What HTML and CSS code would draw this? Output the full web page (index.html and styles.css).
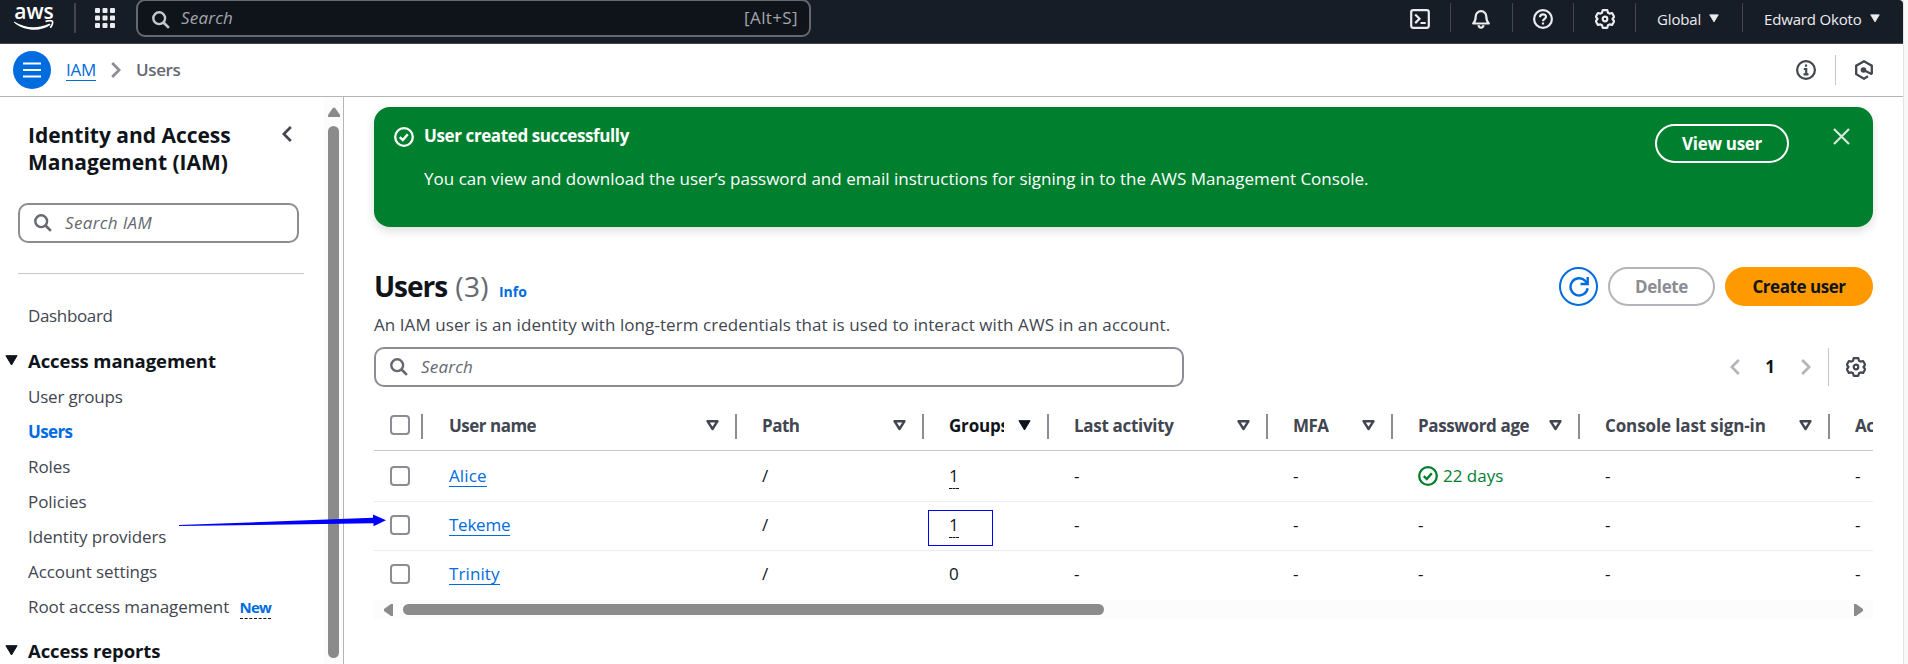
FILE: index.html
```html
<!DOCTYPE html>
<html lang="en">
<head>
<meta charset="utf-8">
<title>Users | IAM</title>
<link rel="stylesheet" href="styles.css">
</head>
<body>
<svg class="defs" aria-hidden="true">
  <symbol id="i-search" viewBox="0 0 18 18"><circle cx="7.2" cy="7.2" r="5.9" fill="none" stroke="currentColor" stroke-width="2.4"/><path d="M11.5 11.5l5.4 5.4" fill="none" stroke="currentColor" stroke-width="2.6"/></symbol>
  <symbol id="i-check" viewBox="0 0 20 20"><circle cx="10" cy="10" r="8.8" fill="none" stroke="currentColor" stroke-width="2.3"/><path d="M5.8 10.2l3 2.9 5-5.8" fill="none" stroke="currentColor" stroke-width="2.4"/></symbol>
  <symbol id="i-gear" viewBox="0 0 20 20"><path d="M7.7 1.2h4.6l.7 2.5 1.6.9 2.5-.6 2.1 3.7-1.7 2.3 1.7 2.3-2.1 3.7-2.5-.6-1.6.9-.7 2.5H7.7L7 16.300l-1.600-.9-2.500.6L.8 12.300 2.500 10 .8 7.700 2.900 4l2.500.6L7 3.700z" fill="none" stroke="currentColor" stroke-width="2.2" stroke-linejoin="round"/><circle cx="10" cy="10" r="2.300" fill="none" stroke="currentColor" stroke-width="2.200"/></symbol>
  <symbol id="i-sort" viewBox="0 0 13 11"><path d="M1.500 1.200h10L6.500 9z" fill="none" stroke="currentColor" stroke-width="2.400" stroke-linejoin="round"/></symbol>
  <symbol id="i-caret" viewBox="0 0 13 11"><path d="M.9.700h11.200L6.500 10z" fill="currentColor" stroke="currentColor" stroke-linejoin="round"/></symbol>
  <symbol id="i-left" viewBox="0 0 10 16"><path d="M8.800 1L1.800 8l7 7" fill="none" stroke="currentColor" stroke-width="2.700"/></symbol>
  <symbol id="i-right" viewBox="0 0 10 16"><path d="M1.200 1l7 7-7 7" fill="none" stroke="currentColor" stroke-width="2.700"/></symbol>
</svg>
<div class="page">
  <header class="topbar">
    <div class="logo"><span class="logo-text">aws</span>
      <svg class="swoosh" width="40" height="11" viewBox="0 0 40 11"><path d="M0 1.500c11 7 24 7.500 35 2.300 1.200-.5 2 .7.900 1.500C26 12.200 10 11 0 2.500z" fill="currentColor"/><path d="M31.500 1.600c3.500-1.300 6.500-1 7 0 .5 1.400-.7 4.600-2.300 6.100" fill="none" stroke="currentColor" stroke-width="1.600"/></svg>
    </div>
    <span class="bar bar-logo"></span>
    <svg class="apps" width="20" height="20" viewBox="0 0 20 20" fill="currentColor"><rect width="5" height="5" rx="1"/><rect x="7.500" width="5" height="5" rx="1"/><rect x="15" width="5" height="5" rx="1"/><rect y="7.500" width="5" height="5" rx="1"/><rect x="7.500" y="7.500" width="5" height="5" rx="1"/><rect x="15" y="7.500" width="5" height="5" rx="1"/><rect y="15" width="5" height="5" rx="1"/><rect x="7.500" y="15" width="5" height="5" rx="1"/><rect x="15" y="15" width="5" height="5" rx="1"/></svg>
    <div class="topsearch"><svg width="18" height="18"><use href="#i-search"/></svg><span class="placeholder">Search</span><span class="shortcut">[Alt+S]</span></div>
    <nav class="tools">
      <div class="tool w-shell"><svg width="20" height="20" viewBox="0 0 20 20" fill="none" stroke="currentColor" stroke-width="2.200"><rect x="1.200" y="1.200" width="17.600" height="17.600" rx="2"/><path d="M5.200 5.500L9.500 9.800l-4.300 4.300M10.500 14h5.200"/></svg></div>
      <div class="tool w-bell"><svg width="20" height="20" viewBox="0 0 20 20" fill="none" stroke="currentColor" stroke-width="2.200" stroke-linejoin="round"><path d="M2.200 14.500c2-2 2.500-3.500 2.500-7a5.300 5.300 0 0 1 10.600 0c0 3.500.5 5 2.500 7z"/><path d="M7.500 16.200c.4 3.300 4.600 3.300 5 0" /></svg></div>
      <div class="tool w-help"><svg width="20" height="20" viewBox="0 0 20 20" fill="none" stroke="currentColor" stroke-width="2.200"><circle cx="10" cy="10" r="8.900"/><path d="M7 8.300c0-4 6-3.700 6-.5 0 2-3 2-3 4.400M10 13.400v2.200"/></svg></div>
      <div class="tool w-gear"><svg width="20" height="20"><use href="#i-gear"/></svg></div>
      <div class="tool w-global">Global<svg width="10" height="9"><use href="#i-caret"/></svg></div>
      <div class="tool w-user">Edward Okoto<svg width="10" height="9"><use href="#i-caret"/></svg></div>
    </nav>
  </header>

  <div class="crumbs">
    <span class="menu"><svg width="18" height="16" viewBox="0 0 18 16" stroke="#fff" stroke-width="2.200"><path d="M0 1.500h18M0 8h18M0 14.500h18"/></svg></span>
    <a class="link crumb-link">IAM</a>
    <svg class="crumb-sep" width="10" height="16"><use href="#i-right"/></svg>
    <span class="crumb-here">Users</span>
    <div class="crumb-tools">
      <svg width="20" height="20" viewBox="0 0 20 20" fill="none" stroke="currentColor" stroke-width="2.200"><circle cx="10" cy="10" r="8.900"/><path d="M10 4.500v2.300M7.800 9h2.400v5M7.500 14.300h5"/></svg>
      <span class="crumb-bar"></span>
      <svg width="20" height="20" viewBox="0 0 20 20" fill="none" stroke="currentColor" stroke-width="2.300"><path d="M14 16.300l-4 2.400-7.800-4.500V5.700L10 1.300l7.800 4.400v8.500"/><circle cx="9.500" cy="10" r="2.800" fill="currentColor" stroke="none"/><path d="M10 10.300l8 3.900"/></svg>
    </div>
  </div>

  <div class="body">
    <aside class="side">
      <div class="side-inner">
        <div class="side-head"><h2>Identity and Access<br>Management (IAM)</h2><svg width="10" height="16"><use href="#i-left"/></svg></div>
        <div class="field side-search"><svg width="18" height="18"><use href="#i-search"/></svg><span class="placeholder">Search IAM</span></div>
        <hr>
        <div class="item t-dash">Dashboard</div>
        <div class="group g-mgmt"><svg width="13" height="11"><use href="#i-caret"/></svg>Access management</div>
        <div class="item t-groups">User groups</div>
        <div class="item current">Users</div>
        <div class="item">Roles</div>
        <div class="item">Policies</div>
        <div class="item">Identity providers</div>
        <div class="item">Account settings</div>
        <div class="item">Root access management <span class="new">New</span></div>
        <div class="group g-rep"><svg width="13" height="11"><use href="#i-caret"/></svg>Access reports</div>
      </div>
      <div class="vscroll"><svg width="12" height="10" viewBox="0 0 12 10"><path d="M5 .8h2L12 8v2H0V8z" fill="#8b8b8b"/></svg><div class="vthumb"></div></div>
    </aside>

    <main class="main">
      <section class="banner">
        <svg class="banner-icon" width="20" height="20"><use href="#i-check"/></svg>
        <div class="banner-text"><strong>User created successfully</strong><p>You can view and download the user’s password and email instructions for signing in to the AWS Management Console.</p></div>
        <span class="btn btn-view">View user</span>
        <svg class="close" width="17" height="17" viewBox="0 0 17 17" stroke="#d9e6dc" stroke-width="2.200"><path d="M1 1l15 15M16 1L1 16"/></svg>
      </section>

      <div class="head">
        <div class="head-text">
          <h1>Users <span class="count">(3)</span><span class="info">Info</span></h1>
          <p class="desc">An IAM user is an identity with long-term credentials that is used to interact with AWS in an account.</p>
        </div>
        <div class="actions">
          <span class="btn btn-refresh"><svg width="20" height="20" viewBox="0 0 20 20" fill="none" stroke="currentColor" stroke-width="2.400"><path d="M18.600 11.200a8.600 8.600 0 1 1-2.300-7.300l1.800 2.600"/><path d="M18.700 0v7h-7.200"/></svg></span>
          <span class="btn btn-delete">Delete</span>
          <span class="btn btn-create">Create user</span>
        </div>
      </div>

      <div class="filter">
        <div class="field main-search"><svg width="18" height="18"><use href="#i-search"/></svg><span class="placeholder">Search</span></div>
        <div class="pager"><svg width="10" height="16"><use href="#i-left"/></svg><b>1</b><svg width="10" height="16"><use href="#i-right"/></svg><span class="pager-bar"></span><svg class="pager-gear" width="20" height="20"><use href="#i-gear"/></svg></div>
      </div>

      <div class="table">
        <div class="row thead">
          <div class="cell sel"><span class="box"></span></div>
          <div class="cell"><span class="th">User name</span><svg width="13" height="11"><use href="#i-sort"/></svg></div>
          <div class="cell"><span class="th">Path</span><svg width="13" height="11"><use href="#i-sort"/></svg></div>
          <div class="cell sorted"><span class="th">Groups</span><svg width="13" height="11"><use href="#i-caret"/></svg></div>
          <div class="cell"><span class="th ls-a">Last activity</span><svg width="13" height="11"><use href="#i-sort"/></svg></div>
          <div class="cell"><span class="th">MFA</span><svg width="13" height="11"><use href="#i-sort"/></svg></div>
          <div class="cell"><span class="th ls-p">Password age</span><svg width="13" height="11"><use href="#i-sort"/></svg></div>
          <div class="cell"><span class="th ls-c">Console last sign-in</span><svg width="13" height="11"><use href="#i-sort"/></svg></div>
          <div class="cell last"><span class="th">Access key ID</span></div>
        </div>
        <div class="row">
          <div class="cell sel"><span class="box"></span></div>
          <div class="cell"><a class="link link-wide">Alice</a></div><div class="cell">/</div>
          <div class="cell"><span class="dashed">1</span></div><div class="cell">-</div><div class="cell">-</div>
          <div class="cell ok"><svg width="20" height="20"><use href="#i-check"/></svg>22 days</div><div class="cell">-</div><div class="cell">-</div>
        </div>
        <div class="row">
          <div class="cell sel"><span class="box"></span></div>
          <div class="cell"><a class="link">Tekeme</a></div><div class="cell">/</div>
          <div class="cell"><span class="dashed">1</span></div><div class="cell">-</div><div class="cell">-</div>
          <div class="cell">-</div><div class="cell">-</div><div class="cell">-</div>
        </div>
        <div class="row">
          <div class="cell sel"><span class="box"></span></div>
          <div class="cell"><a class="link link-wide">Trinity</a></div><div class="cell">/</div>
          <div class="cell">0</div><div class="cell">-</div><div class="cell">-</div>
          <div class="cell">-</div><div class="cell">-</div><div class="cell">-</div>
        </div>
      </div>
      <div class="hscroll"><svg width="9" height="12" viewBox="0 0 9 12"><path d="M9 0v12H7L0 7V5L7 0z" fill="#8b8b8b"/></svg><div class="hthumb"></div><svg class="hr-arrow" width="9" height="12" viewBox="0 0 9 12"><path d="M0 0v12h2l7-5V5L2 0z" fill="#8b8b8b"/></svg></div>
    </main>
  </div>
</div>
<svg class="arrow" width="209" height="14" viewBox="0 0 209 14"><path d="M0 11L194 3.800 194 .5 207 6.200 194.500 12.300 194.500 9.200 0 12z" fill="#00f"/></svg>
<div class="highlight"></div>
</body>
</html>
```
FILE: styles.css
```css
* { box-sizing: border-box; }
body { margin: 0; height: 664px; overflow: hidden; background: #f8f8f8; font: 17px/22px "Open Sans", "Noto Sans", sans-serif; color: #0f141a; position: relative; }
svg { display: block; flex: none; }
.defs { position: absolute; width: 0; height: 0; }
h1, h2, p { margin: 0; }
.page { width: 1904px; height: 664px; background: #fff; border-right: 1px solid #e3e3e5; display: flex; flex-direction: column; }

/* Global navigation */
.topbar { height: 44px; flex: none; background: #161d26; border-bottom: 1px solid #424650; border-top-right-radius: 4px; display: flex; align-items: flex-start; color: #ebebf0; }
.logo { width: 40px; margin-left: 14px; color: #fff; }
.logo-text { display: block; height: 24px; font-size: 21px; line-height: 23px; font-weight: 600; letter-spacing: 0; text-align: center; }
.swoosh { margin-top: -4px; }
.bar { width: 2px; height: 30px; margin-top: 3px; background: #424650; }
.bar-logo { margin-left: 20px; }
.apps { margin: 8px 0 0 19px; }
.topsearch { width: 675px; height: 38px; margin: -1px 0 0 21px; border: 2px solid #656871; border-radius: 9px; background: #0f141a; display: flex; align-items: center; padding: 0 11px 0 14px; color: #c6c6cd; }
.topsearch svg { margin-top: 3px; }
.placeholder { margin-left: 13px; font-style: italic; letter-spacing: .2px; }
.topsearch .placeholder { margin-left: 11px; color: #a4a4ad; }
.shortcut { margin-left: auto; color: #a4a4ad; letter-spacing: .38px; }
.tools { margin-left: auto; display: flex; font-size: 15px; }
.tool { height: 37px; display: flex; align-items: center; position: relative; }
.tool + .tool::before { content: ""; position: absolute; left: 0; top: 3px; width: 1px; height: 29px; background: #424650; }
.w-shell { width: 40px; }
.w-bell { width: 62px; padding-left: 21px; }
.w-help { width: 61px; padding-left: 21px; }
.w-gear { width: 62px; padding-left: 22px; }
.w-global { width: 107px; padding-left: 22px; letter-spacing: -.15px; gap: 8px; }
.w-user { width: 161px; padding-left: 22px; letter-spacing: -.17px; gap: 8px; }

/* Breadcrumbs */
.crumbs { height: 53px; flex: none; border-bottom: 1px solid #b4b4bb; display: flex; align-items: center; padding-left: 13px; }
.menu { width: 38px; height: 38px; border-radius: 50%; background: #006ce0; display: grid; place-items: center; }
.link { color: #006ce0; border-bottom: 1px solid #006ce0; line-height: 21px; letter-spacing: -.25px; }
.link-wide { letter-spacing: .1px; }
.crumb-link { margin-left: 15px; }
.crumb-sep { margin: 0 15px 0 15px; color: #8c8c94; }
.crumb-here { color: #656871; font-weight: 600; letter-spacing: -.4px; }
.crumb-tools { margin-left: auto; margin-right: 29px; display: flex; align-items: center; color: #424650; }
.crumb-bar { width: 1px; height: 30px; background: #c6c6cd; margin: 0 18px 0 19px; }

.body { flex: 1; display: flex; min-height: 0; }

/* Side navigation */
.side { width: 344px; border-right: 1px solid #b4b4bb; display: flex; }
.side-inner { width: 324px; white-space: nowrap; }
.side-head { display: flex; padding: 25px 0 0 28px; color: #424650; }
.side-head h2 { width: 254px; font-size: 21px; line-height: 27px; font-weight: 700; letter-spacing: -.02px; color: #0f141a; }
.side-head svg { margin-top: 4px; }
.field { height: 40px; border: 2px solid #8c8c94; border-radius: 10px; display: flex; align-items: center; padding-left: 14px; color: #656871; }
.side-search { width: 281px; margin: 27px 0 0 18px; }
.side-search .placeholder { letter-spacing: .34px; }
.side-inner hr { width: 286px; height: 1px; border: 0; margin: 30px 0 24px 18px; background: #c6c6cd; }
.item { height: 35px; line-height: 35px; padding-left: 28px; color: #424650; letter-spacing: -.08px; }
.t-dash { letter-spacing: -.35px; }
.t-groups { letter-spacing: -.2px; }
.current { color: #006ce0; font-weight: 700; letter-spacing: -.65px; }
.group { display: flex; align-items: center; gap: 10px; height: 35px; padding-left: 5px; font-size: 18.5px; font-weight: 700; letter-spacing: -.08px; }
.g-mgmt { margin: 10px 0 1px; }
.g-rep { margin-top: 9px; letter-spacing: -.13px; }
.new { display: inline-block; margin-left: 6px; height: 23px; line-height: 23px; font-size: 15px; font-weight: 700; letter-spacing: -.8px; color: #006ce0; border-bottom: 1px dashed #0f141a; }
.vscroll { width: 19px; background: #fcfcfc; padding: 10px 0 0 4px; }
.vthumb { width: 11px; height: 532px; margin-top: 9px; border-radius: 6px; background: #8b8b8b; }

/* Content */
.main { width: 1499px; margin-left: 30px; padding-top: 10px; }
.banner { height: 120px; border-radius: 16px; background: #00802f; box-shadow: 0 4px 10px rgba(15, 20, 26, .14); color: #fff; display: flex; align-items: flex-start; padding: 17px 23px 0 20px; }
.banner-icon { margin-top: 3px; }
.banner-text { flex: 1; padding: 1px 0 0 10px; }
.banner strong { display: block; letter-spacing: -.39px; }
.banner p { margin-top: 21px; letter-spacing: .015px; }
.btn { height: 39px; border: 2px solid; border-radius: 20px; display: flex; align-items: center; justify-content: center; font-weight: 700; }
.btn-view { width: 134px; letter-spacing: -.29px; }
.close { margin: 4px 0 0 44px; }
.head { display: flex; justify-content: space-between; margin-top: 40px; height: 80px; }
h1 { font-size: 28px; line-height: 38px; font-weight: 700; letter-spacing: -1.05px; }
.count { font-weight: 400; color: #656871; letter-spacing: .4px; margin-left: 2px; }
.info { margin-left: 10px; font-size: 14px; letter-spacing: 0; color: #006ce0; }
.desc { margin-top: 8px; color: #424650; letter-spacing: .07px; line-height: 12px; }
.actions { display: flex; gap: 10px; }
.btn-refresh { width: 39px; color: #006ce0; }
.btn-delete { width: 107px; color: #8c8c94; border-color: #b4b4bb; letter-spacing: -.38px; }
.btn-create { width: 148px; background: #ff9900; border-color: #ff9900; letter-spacing: -.46px; }
.filter { display: flex; justify-content: space-between; }
.main-search { width: 810px; }
.pager { display: flex; align-items: center; color: #b4b4bb; margin-right: 7px; }
.pager b { color: #0f141a; margin: 0 26px 0 25px; }
.pager-bar { width: 1px; height: 38px; background: #c6c6cd; margin: 0 17px 0 17px; }
.pager-gear { color: #424650; }

/* Users table */
.table { margin-top: 14px; overflow: hidden; }
.row { display: grid; width: 1499px; grid-template-columns: 49px 314px 187px 125px 219px 125px 187px 250px 43px; height: 49px; padding-bottom: 2px; border-bottom: 1px solid #ebebf0; }
.row:nth-child(2) { height: 51px; padding-bottom: 0; }
.row:last-child { border-bottom: 0; padding-bottom: 3px; }
.cell { display: flex; align-items: center; padding-left: 25px; white-space: nowrap; min-width: 0; position: relative; }
.row .sel { padding: 0 0 0 16px; justify-content: flex-start; }
.row .sel + .cell { padding-left: 26px; }
.thead { height: 50px; padding-bottom: 0; border-bottom-color: #c6c6cd; color: #424650; font-weight: 700; }
.thead .cell { padding-right: 18px; justify-content: space-between; }
.thead .cell:not(.last)::after { content: ""; position: absolute; right: 0; top: 13px; width: 2px; height: 25px; background: #8c8c94; }
.thead .sel::after { background: #c6c6cd; }
.thead .box { margin-bottom: 1px; }
.th { letter-spacing: -.5px; overflow: hidden; }
.ls-a { letter-spacing: -.3px; }
.ls-p { letter-spacing: -.37px; }
.ls-c { letter-spacing: -.12px; }
.sorted { color: #0f141a; }
.sorted .th { width: 55px; letter-spacing: -.2px; }
.thead .last { padding-right: 0; overflow: hidden; }
.box { flex: none; width: 20px; height: 20px; border: 2px solid #8c8c94; border-radius: 4px; background: #fff; }
.dashed { height: 26px; line-height: 26px; border-bottom: 1px dashed #0f141a; }
.ok { color: #00802f; gap: 5px; }

.hscroll { height: 19px; background: #fcfcfc; display: flex; padding: 4px 10px 0; }
.hthumb { width: 701px; height: 11px; margin-left: 10px; border-radius: 6px; background: #8b8b8b; }
.hr-arrow { margin-left: auto; }

/* Annotations over the page */
.arrow { position: absolute; left: 179px; top: 514px; }
.highlight { position: absolute; left: 928px; top: 510px; width: 65px; height: 36px; border: 1px solid #00f; }
```
